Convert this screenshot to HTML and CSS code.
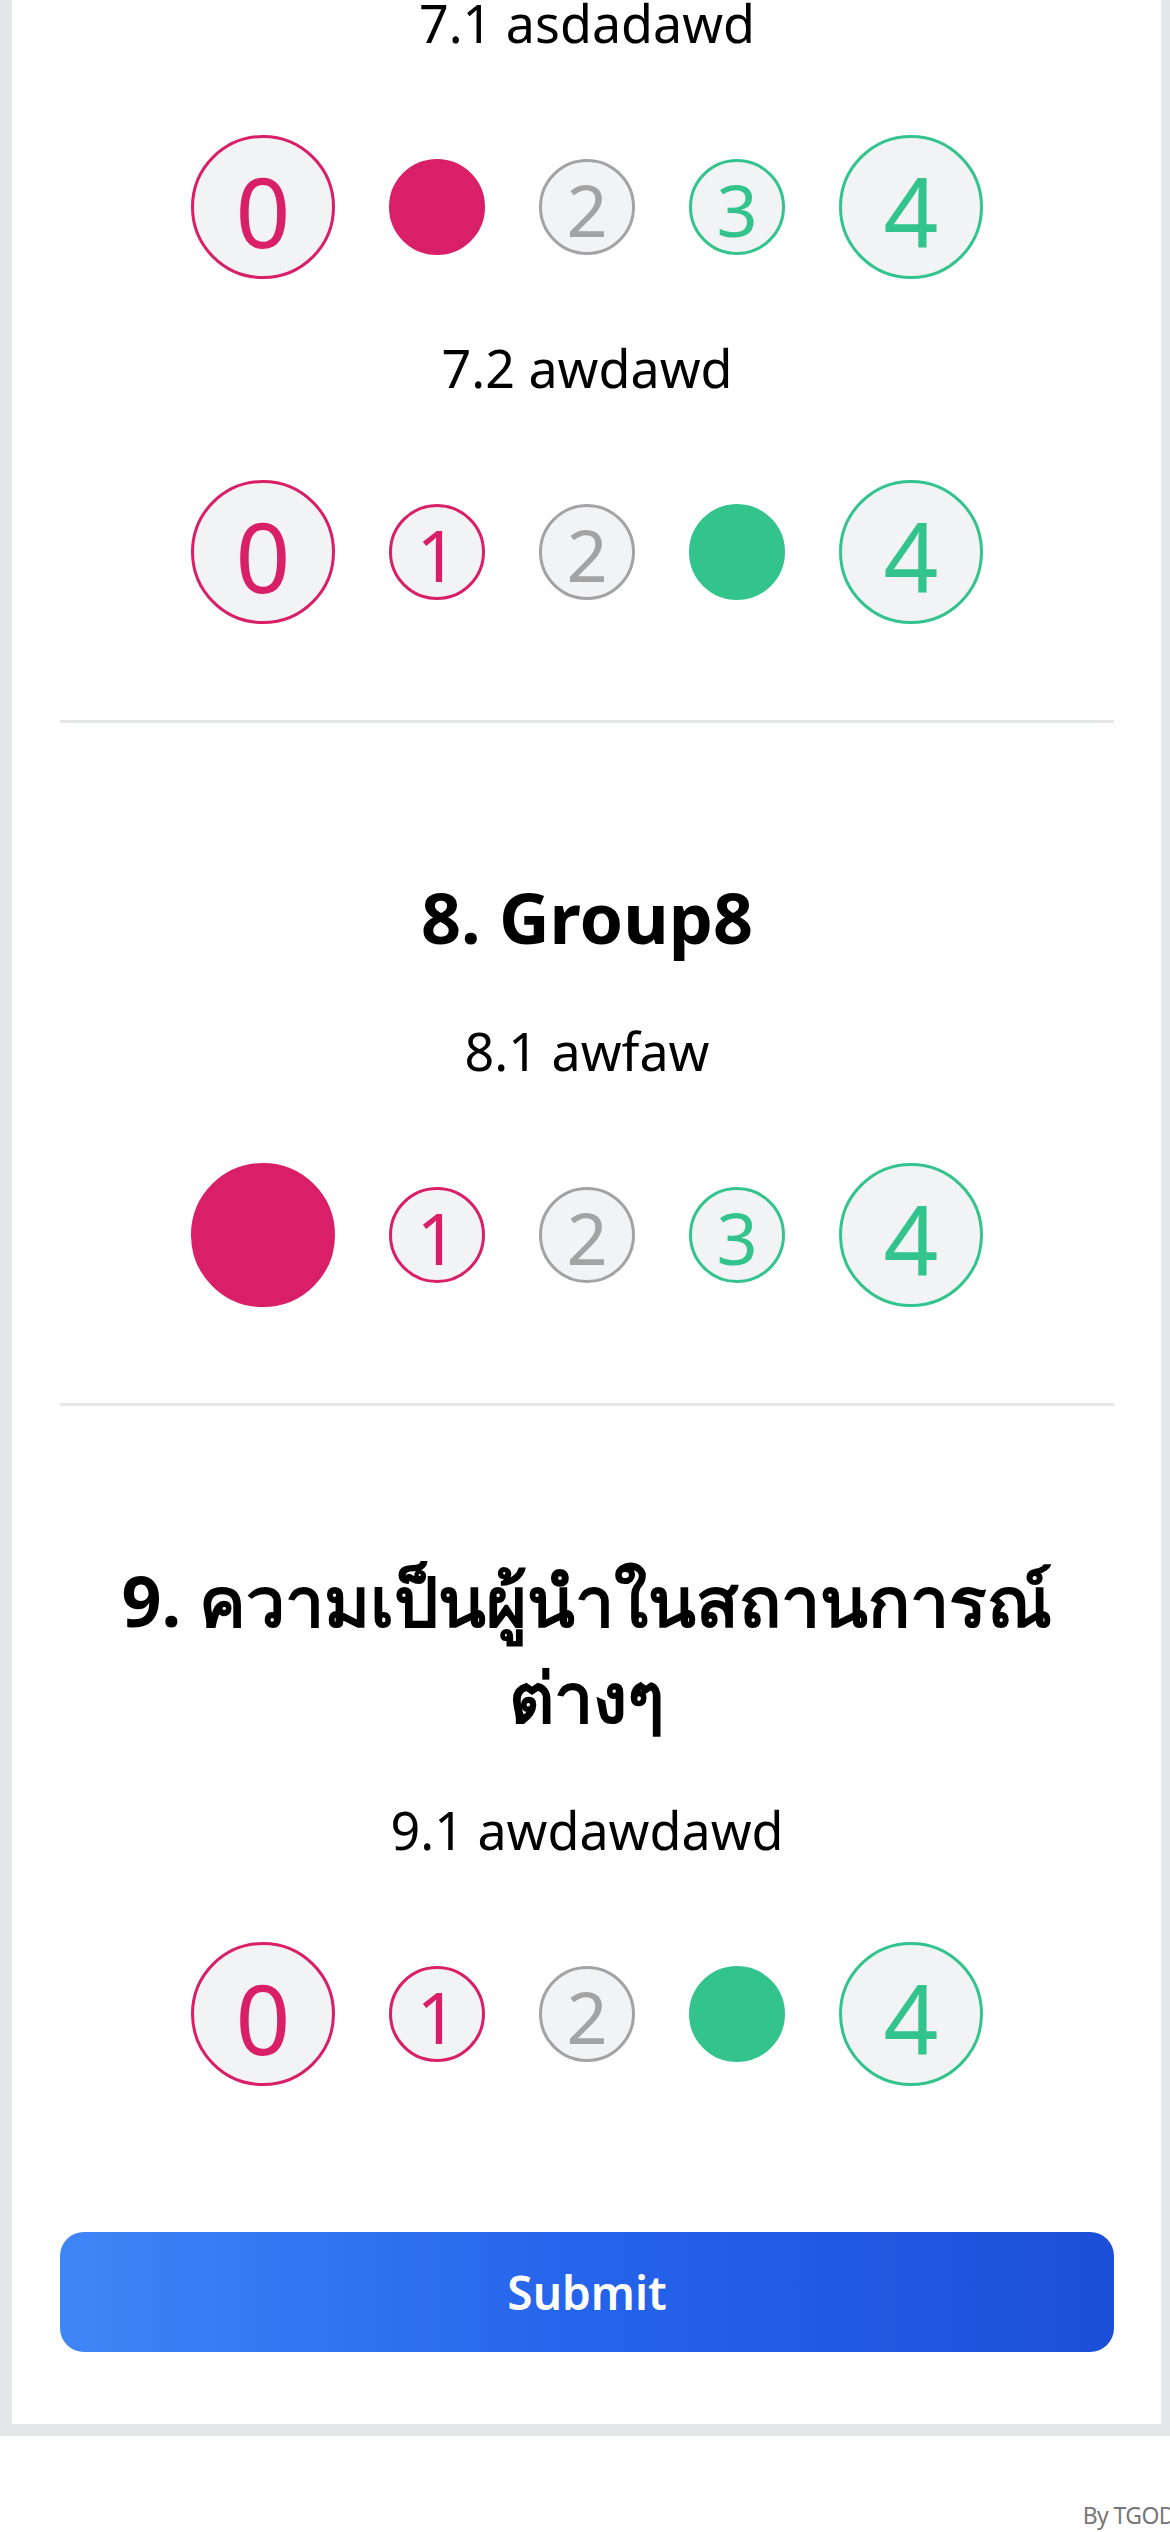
FILE: index.html
```html
<!DOCTYPE html>
<html lang="th">
<head>
<meta charset="utf-8">
<title>Survey</title>
<link rel="stylesheet" href="styles.css">
</head>
<body>
<div class="page">
  <main class="card">
    <section class="group first">
      <div class="question">
        <p class="label">7.1 asdadawd</p>
        <div class="scale">
          <span class="dot big neg">0</span>
          <span class="dot neg filled">1</span>
          <span class="dot mid">2</span>
          <span class="dot pos">3</span>
          <span class="dot big pos">4</span>
        </div>
      </div>
      <div class="question">
        <p class="label">7.2 awdawd</p>
        <div class="scale">
          <span class="dot big neg">0</span>
          <span class="dot neg">1</span>
          <span class="dot mid">2</span>
          <span class="dot pos filled">3</span>
          <span class="dot big pos">4</span>
        </div>
      </div>
    </section>
    <hr class="divider">
    <section class="group">
      <h2 class="heading">8. Group8</h2>
      <div class="question">
        <p class="label">8.1 awfaw</p>
        <div class="scale">
          <span class="dot big neg filled">0</span>
          <span class="dot neg">1</span>
          <span class="dot mid">2</span>
          <span class="dot pos">3</span>
          <span class="dot big pos">4</span>
        </div>
      </div>
    </section>
    <hr class="divider">
    <section class="group">
      <h2 class="heading">9. ความเป็นผู้นำในสถานการณ์ต่างๆ</h2>
      <div class="question">
        <p class="label">9.1 awdawdawd</p>
        <div class="scale">
          <span class="dot big neg">0</span>
          <span class="dot neg">1</span>
          <span class="dot mid">2</span>
          <span class="dot pos filled">3</span>
          <span class="dot big pos">4</span>
        </div>
      </div>
    </section>
    <button class="submit" type="button">Submit</button>
  </main>
</div>
<footer class="footer">
  <span class="credit">By TGOD</span>
</footer>
</body>
</html>
```

FILE: styles.css
```css
* {
  box-sizing: border-box;
  margin: 0;
  padding: 0;
}

html,
body {
  background: #ffffff;
}

body {
  font-family: "Noto Sans", "Open Sans", "Noto Sans CJK SC", sans-serif;
  color: #000000;
  overflow-x: hidden;
}

.page {
  background: #e5e7eb;
  padding: 0 9px 12px 12px;
}

.card {
  background: #ffffff;
  padding: 0 47px 72px 48px;
}

.group {
  text-align: center;
}

.first {
  margin-top: -19px;
}

.divider {
  border: 0;
  height: 3px;
  background: #e5e7eb;
  margin-top: 96px;
}

.heading {
  font-size: 70px;
  line-height: 96px;
  font-weight: 700;
  margin-top: 146px;
  margin-bottom: 44px;
}

.label {
  font-size: 52px;
  line-height: 84px;
  font-weight: 400;
}

.question + .question {
  margin-top: 47px;
}

.scale {
  display: flex;
  justify-content: center;
  align-items: center;
  gap: 54px;
  margin-top: 70px;
}

.dot {
  width: 96px;
  height: 96px;
  flex: none;
  border-radius: 50%;
  border: 3px solid;
  background: #f2f3f5;
  display: flex;
  align-items: center;
  justify-content: center;
  font-size: 72px;
  line-height: 1;
  padding-top: 4px;
}

.dot.big {
  width: 144px;
  height: 144px;
  font-size: 96px;
  padding-top: 8px;
}

.neg {
  color: #d81f68;
  border-color: #d81f68;
}

.mid {
  color: #a3a3a3;
  border-color: #a3a3a3;
}

.pos {
  color: #33c48d;
  border-color: #33c48d;
}

.neg.filled {
  background: #d81f68;
}

.pos.filled {
  background: #33c48d;
}

.submit {
  display: block;
  margin-top: 146px;
  width: 100%;
  height: 120px;
  border: 0;
  border-radius: 24px;
  background: linear-gradient(to right, #4085f6, #2563eb 50%, #1c4fd8);
  color: #ffffff;
  font-family: inherit;
  font-size: 46px;
  font-weight: 600;
}

.footer {
  height: 96px;
  display: flex;
  justify-content: flex-end;
  align-items: flex-end;
}

.credit {
  font-size: 23px;
  line-height: 34px;
  letter-spacing: -0.6px;
  color: #777777;
  white-space: nowrap;
  margin-right: -5px;
}
```
